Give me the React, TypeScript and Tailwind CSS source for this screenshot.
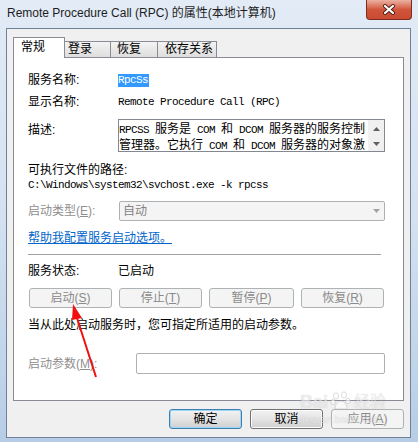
import React from "react";

const mono = "font-['Liberation_Mono'] text-[11px] tracking-[-0.6px]";

function Btn({ children, w, kind = "normal" }: { children: React.ReactNode; w: string; kind?: "normal" | "default" | "disabled" }) {
  const base = "h-[20px] rounded-[3px] border flex items-center justify-center leading-[14px] text-[12px]";
  const look =
    kind === "disabled"
      ? "border-[#adb2b5] bg-[#f4f4f4] text-[#8a8a8a]"
      : kind === "default"
      ? "border-[#3c7fb1] bg-linear-to-b from-[#f2f2f2] via-[#e4e4e4] to-[#cfcfcf] text-black shadow-[inset_0_0_0_1px_#9fd6f3]"
      : "border-[#707070] bg-linear-to-b from-[#f2f2f2] via-[#e4e4e4] to-[#cfcfcf] text-black shadow-[inset_0_0_0_1px_#fcfcfc]";
  return <div className={`${base} ${look} ${w}`}>{children}</div>;
}

export default function App() {
  const tabs = [
    { label: "登录", cls: "w-[46px] pl-[3px]" },
    { label: "恢复", cls: "w-[47px] pl-[6px]" },
    { label: "依存关系", cls: "w-[59px] pl-[7px]" },
  ];

  return (
    <div className="relative flex h-[442px] w-[418px] flex-col overflow-hidden bg-linear-to-b from-[#e2ebf6] via-[#d3e1f1] to-[#b7cde6] font-['Liberation_Sans','Noto_Sans_CJK_SC',sans-serif] text-[12px] text-black">
      {/* title bar */}
      <div className="flex h-[28px] shrink-0 items-start">
        <div className="flex-1 pl-[7px] pt-[6px] leading-[14px] text-[#1e1e1e]">
          Remote Procedure Call (RPC) 的属性(本地计算机)
        </div>
        <div className="mr-[6px] flex h-[20px] w-[46px] items-center justify-center rounded-b-[4px] border border-t-0 border-[#7c2b1d] bg-linear-to-b from-[#eab0a2] via-[#d2563c] to-[#c94a30]">
          <svg width="14" height="11" viewBox="0 0 14 11">
            <path d="M3 2 L11 9 M11 2 L3 9" stroke="#4a1f17" strokeWidth="4" strokeLinecap="round" />
            <path d="M3 2 L11 9 M11 2 L3 9" stroke="#ffffff" strokeWidth="2.2" strokeLinecap="round" />
          </svg>
        </div>
      </div>

      {/* client area */}
      <div className="ml-[6px] mr-[7px] flex h-[410px] flex-col border border-[#6f8196] bg-[#f0f0f0] pl-[6px] pr-[6px] pt-[8px]">
        {/* tabs */}
        <div className="relative z-10 -mb-px flex h-[21px] items-end">
          <div className="h-[21px] w-[52px] border border-b-0 border-[#898c95] bg-white pl-[7px] pt-[2px] leading-[14px]">常规</div>
          {tabs.map((t) => (
            <div
              key={t.label}
              className={`mb-px h-[16px] border border-b-0 border-l-0 border-[#898c95] bg-linear-to-b from-[#f3f3f3] to-[#dedede] leading-[14px] ${t.cls}`}
            >
              {t.label}
            </div>
          ))}
        </div>

        {/* panel */}
        <div className="flex h-[344px] flex-col border border-[#898c95] bg-white pl-[14px] pr-[18px]">
          <div className="mt-[15px] flex h-[14px] items-center">
            <div className="w-[90px] leading-[14px]">服务名称:</div>
            <span className={`h-[13px] bg-[#3399ff] pr-px leading-[13px] text-white ${mono}`}>RpcSs</span>
          </div>

          <div className="mt-[8px] flex h-[14px] items-center">
            <div className="w-[90px] leading-[14px]">显示名称:</div>
            <span className={mono}>Remote Procedure Call (RPC)</span>
          </div>

          <div className="mt-[10px] flex items-start">
            <div className="mt-[4px] w-[90px] leading-[14px]">描述:</div>
            <div className="flex h-[33px] w-[267px] border border-[#828790] bg-white">
              <div className="flex-1 whitespace-pre pt-px font-['Noto_Sans_CJK_SC',sans-serif] leading-[13px]">
                <div>
                  <span className={mono}>RPCSS </span>服务是<span className={mono}> COM </span>和<span className={mono}> DCOM </span>服务器的服务控制
                </div>
                <div>
                  管理器。它执行<span className={mono}> COM </span>和<span className={mono}> DCOM </span>服务器的对象激
                </div>
              </div>
              <div className="flex w-[16px] flex-col items-center justify-between bg-[#f0f0f0] pb-[5px] pt-[7px]">
                <svg width="7" height="4" viewBox="0 0 7 4"><path d="M0 4 L3.5 0 L7 4 Z" fill="#606060" /></svg>
                <svg width="7" height="4" viewBox="0 0 7 4"><path d="M0 0 L3.5 4 L7 0 Z" fill="#606060" /></svg>
              </div>
            </div>
          </div>

          <div className="mt-[11px] flex h-[14px] items-center leading-[14px]">可执行文件的路径:</div>
          <div className={`mt-[1px] flex h-[14px] items-center ${mono}`}>C:\Windows\system32\svchost.exe -k rpcss</div>

          <div className="mt-[9px] flex h-[20px] items-center">
            <div className="w-[91px] leading-[14px] text-[#8f8f8f]">
              启动类型(<span className="underline">E</span>):
            </div>
            <div className="flex h-[20px] w-[266px] items-center justify-between rounded-[2px] border border-[#adb2b5] bg-[#f4f4f4] pl-[3px] pr-[4px] text-[#838383]">
              <span className="leading-[14px]">自动</span>
              <svg width="7" height="4" viewBox="0 0 7 4"><path d="M0 0 L3.5 4 L7 0 Z" fill="#a2a2a2" /></svg>
            </div>
          </div>

          <div className="mt-[10px] flex h-[14px] items-center">
            <span className="leading-[14px] text-[#0066cc] underline">帮助我配置服务启动选项。</span>
          </div>

          <div className="mt-[9px] h-px w-[353px] bg-[#a0a0a0]" />

          <div className="mt-[9px] flex h-[14px] items-center">
            <div className="w-[90px] leading-[14px]">服务状态:</div>
            <span className="leading-[14px]">已启动</span>
          </div>

          <div className="ml-px mt-[10px] flex gap-[7px]">
            <Btn w="w-[83px]" kind="disabled">启动(<span className="underline">S</span>)</Btn>
            <Btn w="w-[83px]" kind="disabled">停止(<span className="underline">T</span>)</Btn>
            <Btn w="w-[85px]" kind="disabled">暂停(<span className="underline">P</span>)</Btn>
            <Btn w="w-[83px]" kind="disabled">恢复(<span className="underline">R</span>)</Btn>
          </div>

          <div className="mt-[10px] flex h-[14px] items-center leading-[14px]">当从此处启动服务时，您可指定所适用的启动参数。</div>

          <div className="mt-[21px] flex h-[21px] items-center">
            <div className="w-[108px] leading-[14px] text-[#8f8f8f]">
              启动参数(<span className="underline">M</span>):
            </div>
            <div className="h-[21px] w-[249px] rounded-[2px] border border-[#adb2b5] bg-white" />
          </div>
        </div>

        {/* dialog buttons */}
        <div className="mt-[8px] flex justify-end gap-[8px]">
          <Btn w="w-[73px]" kind="default">确定</Btn>
          <Btn w="w-[73px]">取消</Btn>
          <Btn w="w-[73px]" kind="disabled">应用(<span className="underline">A</span>)</Btn>
        </div>
      </div>

      {/* watermark */}
      <div className="pointer-events-none absolute left-[300px] top-[390px] flex flex-col text-white/60 [text-shadow:0_0_1px_rgba(0,0,0,0.2)]">
        <div className="flex items-end gap-[2px]">
          <span className="text-[18px] font-bold leading-[20px]">Bai</span>
          <svg width="22" height="22" viewBox="0 0 22 22" className="opacity-60">
            <g fill="#ffffff" stroke="#b8b8b8" strokeWidth="0.8">
              <ellipse cx="6" cy="6" rx="2.5" ry="3.2" />
              <ellipse cx="14" cy="5" rx="2.5" ry="3.2" />
              <ellipse cx="3" cy="12" rx="2.2" ry="2.8" />
              <ellipse cx="18" cy="11" rx="2.2" ry="2.8" />
              <path d="M5 19 C5 13 9 11 11 11 C13 11 17 13 17 19 Z" />
            </g>
          </svg>
          <span className="text-[16px] leading-[20px]">经验</span>
        </div>
        <span className="mt-[2px] text-[10px] leading-[11px]">jingyan.baidu.com</span>
      </div>

      {/* red arrow */}
      <svg className="pointer-events-none absolute inset-0" width="418" height="442" viewBox="0 0 418 442">
        <line x1="96" y1="377" x2="77" y2="318" stroke="#f01010" strokeWidth="2" />
        <polygon points="73,304 82,318 72,320" fill="#f01010" />
      </svg>
    </div>
  );
}
